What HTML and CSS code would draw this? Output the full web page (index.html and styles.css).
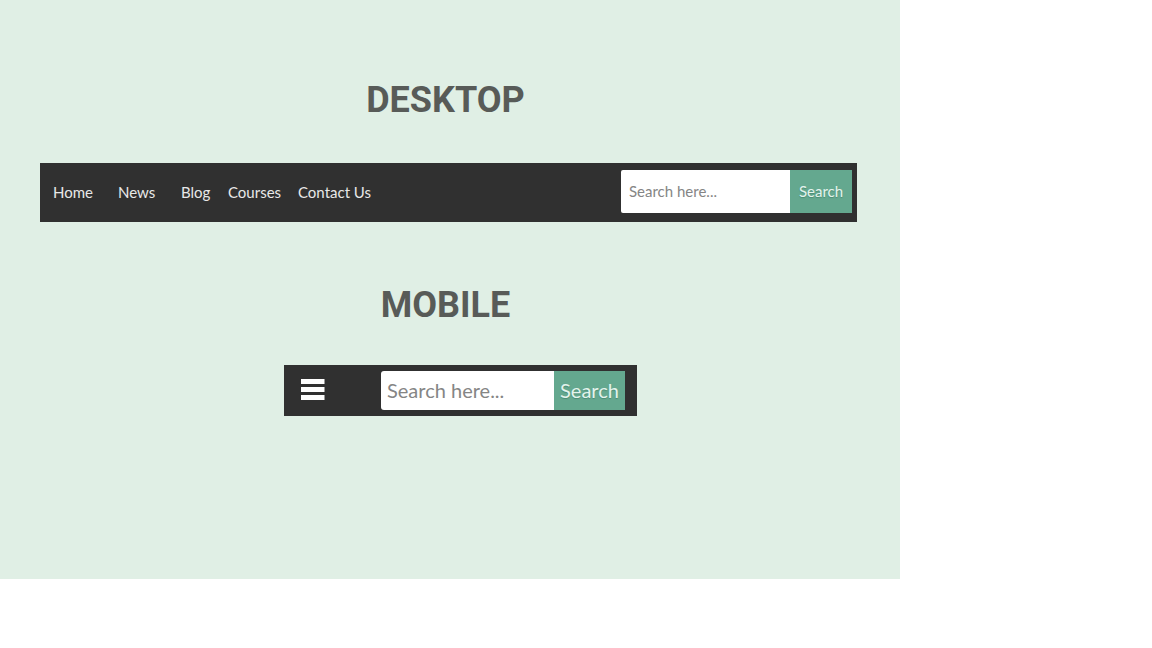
FILE: index.html
```html
<!DOCTYPE html>
<html lang="en">
<head>
<meta charset="utf-8">
<meta name="viewport" content="width=device-width, initial-scale=1">
<title>Navigation bar</title>
<link rel="stylesheet" href="styles.css">
</head>
<body>
<main class="board">
  <section class="demo">
    <h2 class="title">DESKTOP</h2>
    <nav class="bar" aria-label="Desktop">
      <ul class="links">
        <li><a href="#home">Home</a></li>
        <li><a href="#news">News</a></li>
        <li><a href="#blog">Blog</a></li>
        <li><a href="#courses">Courses</a></li>
        <li><a href="#contact">Contact Us</a></li>
      </ul>
      <form class="search">
        <input class="field" type="text" placeholder="Search here..." aria-label="Search">
        <button class="submit" type="button">Search</button>
      </form>
    </nav>
  </section>
  <section class="demo demo-mobile">
    <h2 class="title">MOBILE</h2>
    <div class="phone">
      <nav class="bar bar-mobile" aria-label="Mobile">
        <button class="menu" type="button" aria-label="Open menu">
          <svg width="24" height="22" viewBox="0 0 24 22" fill="#fff" aria-hidden="true">
            <rect y="0" width="23.5" height="5"/>
            <rect y="8" width="23.5" height="5"/>
            <rect y="16" width="23.5" height="5"/>
          </svg>
        </button>
        <form class="search search-mobile">
          <input class="field" type="text" placeholder="Search here..." aria-label="Search">
          <button class="submit" type="button">Search</button>
        </form>
      </nav>
    </div>
  </section>
</main>
</body>
</html>
```
FILE: styles.css
```css
* {
  box-sizing: border-box;
}

body {
  margin: 0;
  background: #fff;
  font-family: Lato, "Open Sans", sans-serif;
}

.board {
  max-width: 900px;
  padding: 77px 43px 163px 40px;
  background: #e0efe5;
}

.demo-mobile {
  margin-top: 60px;
}

.title {
  margin: 0;
  padding: 0 6px 0 0;
  color: #585b58;
  font: 700 36px/46px Roboto, sans-serif;
  text-align: center;
}

.bar {
  display: flex;
  align-items: center;
  justify-content: space-between;
  margin-top: 40px;
  padding: 7px 5px 9px 13px;
  background: #303030;
}

.links {
  display: grid;
  grid-template-columns: 65px 63px 47px 70px auto;
  margin: 0;
  padding: 0;
  list-style: none;
  font-size: 15px;
  line-height: 20px;
}

.links a {
  color: #e8e8e8;
  text-decoration: none;
  white-space: nowrap;
}

.search {
  display: flex;
  width: 231px;
  height: 43px;
  font-size: 15px;
}

.field,
.submit {
  height: 100%;
  border: 0;
  font: inherit;
}

.field {
  flex: 1;
  min-width: 0;
  padding: 0 8px 2px;
  border-radius: 2px 0 0 2px;
  background: #fff;
  color: #444;
}

.field::placeholder {
  color: #858585;
  opacity: 1;
}

.submit {
  width: 62px;
  padding: 0 0 2px;
  background: #64a88f;
  color: #e3f3ec;
  text-shadow: 0 1px 1px #4a8b73;
}

.phone {
  padding-left: 24px;
}

.bar-mobile {
  max-width: 353px;
  margin: 37px auto 0;
  padding: 6px 12px 6px 17px;
}

.menu {
  display: flex;
  padding: 0 0 2px;
  border: 0;
  background: none;
}

.search-mobile {
  width: 244px;
  height: 39px;
  font-size: 20px;
}

.search-mobile .field {
  padding: 0 6px 2px;
  border-radius: 3px 0 0 3px;
}

.search-mobile .submit {
  width: 71px;
}
```
